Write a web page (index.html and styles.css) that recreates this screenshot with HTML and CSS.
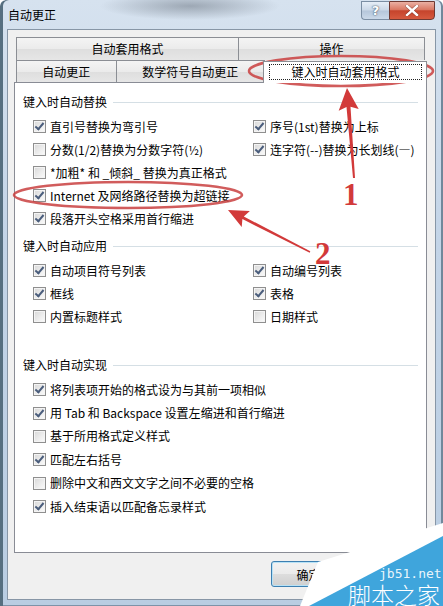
FILE: index.html
```html
<!DOCTYPE html>
<html lang="zh-CN">
<head>
    <meta charset="UTF-8">
    <meta name="viewport" content="width=device-width, initial-scale=1.0">
    <link rel="stylesheet" href="styles.css">
</head>
<body>
    <div class="window">
        <div class="titlebar">
            <span class="title">自动更正</span>
            <div class="caption">
                <span class="cap-help">?</span>
                <span class="cap-close">
                    <svg width="14" height="11" viewBox="0 0 14 11">
                        <path d="M2 1 L12 10 M12 1 L2 10" stroke="#5a2019" stroke-width="3.6" stroke-linecap="square" opacity="0.5"/>
                        <path d="M2 1 L12 10 M12 1 L2 10" stroke="#fff" stroke-width="2.4" stroke-linecap="square"/>
                    </svg>
                </span>
            </div>
        </div>

        <div class="client">
            <div class="tabstrip">
                <div class="tab-row">
                    <div class="tab tab-format">自动套用格式</div>
                    <div class="tab tab-actions">操作</div>
                </div>
                <div class="tab-row">
                    <div class="tab tab-auto">自动更正</div>
                    <div class="tab tab-math">数学符号自动更正</div>
                    <div class="tab active"><span class="focus">键入时自动套用格式</span></div>
                </div>
            </div>

            <div class="panel">
                <section class="group">
                    <div class="group-title"><span>键入时自动替换</span></div>
                    <div class="options">
                        <label class="opt"><span class="cb on"></span>直引号替换为弯引号</label>
                        <label class="opt"><span class="cb on"></span>序号(1st)替换为上标</label>
                        <label class="opt"><span class="cb"></span>分数(1/2)替换为分数字符(½)</label>
                        <label class="opt"><span class="cb on"></span>连字符(--)替换为长划线(—)</label>
                        <label class="opt wide"><span class="cb"></span>*加粗* 和 _倾斜_ 替换为真正格式</label>
                        <label class="opt wide"><span class="cb on"></span>Internet 及网络路径替换为超链接</label>
                        <label class="opt wide"><span class="cb on"></span>段落开头空格采用首行缩进</label>
                    </div>
                </section>

                <section class="group group-apply">
                    <div class="group-title"><span>键入时自动应用</span></div>
                    <div class="options">
                        <label class="opt"><span class="cb on"></span>自动项目符号列表</label>
                        <label class="opt"><span class="cb on"></span>自动编号列表</label>
                        <label class="opt"><span class="cb on"></span>框线</label>
                        <label class="opt"><span class="cb on"></span>表格</label>
                        <label class="opt"><span class="cb"></span>内置标题样式</label>
                        <label class="opt"><span class="cb"></span>日期样式</label>
                    </div>
                </section>

                <section class="group group-do">
                    <div class="group-title"><span>键入时自动实现</span></div>
                    <div class="options single">
                        <label class="opt"><span class="cb on"></span>将列表项开始的格式设为与其前一项相似</label>
                        <label class="opt"><span class="cb on"></span>用 Tab 和 Backspace 设置左缩进和首行缩进</label>
                        <label class="opt"><span class="cb"></span>基于所用格式定义样式</label>
                        <label class="opt"><span class="cb on"></span>匹配左右括号</label>
                        <label class="opt"><span class="cb"></span>删除中文和西文文字之间不必要的空格</label>
                        <label class="opt"><span class="cb on"></span>插入结束语以匹配备忘录样式</label>
                    </div>
                </section>
            </div>

            <div class="footer">
                <button class="btn default">确定</button>
            </div>
        </div>

        <!-- red marks drawn on the screenshot + site watermark -->
        <svg class="overlay" width="443" height="606" viewBox="0 0 443 606">
            <g class="marks">
                <ellipse cx="341" cy="71" rx="92" ry="15" fill="none" stroke="#c9403f" stroke-width="2.6" opacity="0.85"/>
                <ellipse cx="128" cy="195" rx="114" ry="13" fill="none" stroke="#c9403f" stroke-width="2.6" opacity="0.85"/>
                <polygon points="347,88 358.7,109.1 350.5,106.8 355,178 353,178 346.5,107.1 338.7,110.7" fill="#d23a3a"/>
                <polygon points="228,210 249.9,211 243.8,216.5 310.3,251.3 309.7,252.7 242.4,219.1 241.7,227.1" fill="#d23a3a"/>
                <text x="343" y="205" class="num">1</text>
                <text x="315" y="264" class="num">2</text>
            </g>
            <g class="watermark">
                <polygon points="300,606 318,562 443,523 443,606" fill="#ffffff"/>
                <polygon points="309,606 443,536 443,606" fill="#3fa5dc"/>
                <text x="379" y="578" class="wm-site">jb51.net</text>
                <text x="348" y="604" class="wm-name">脚本之家</text>
            </g>
        </svg>
    </div>
</body>
</html>
```

FILE: styles.css
```css
* {
    box-sizing: border-box;
}
body {
    margin: 0;
    width: 443px;
    height: 606px;
    overflow: hidden;
    font-family: "Noto Sans CJK SC", "Noto Sans", sans-serif;
    font-size: 12px;
    color: #000;
}

/* window frame */
.window {
    position: relative;
    width: 443px;
    height: 606px;
    padding: 0 7px 6px 7px;
    display: flex;
    flex-direction: column;
    background:
        radial-gradient(ellipse 90px 14px at 190px 6px, rgba(110,120,132,0.55), rgba(110,120,132,0)),
        linear-gradient(180deg, #d6e2ef 0%, #c3d4e7 40%, #b9cde2 100%);
    box-shadow: inset 3px 0 0 #566f80, inset -2px 0 0 #71889b, inset 0 -1px 0 #7d93a8;
    border-radius: 6px 6px 0 0;
}
.titlebar {
    height: 29px;
    display: flex;
    justify-content: space-between;
    align-items: flex-start;
}
.title {
    margin: 7px 0 0 1px;
    line-height: 16px;
}
.caption {
    display: flex;
    margin: 1px 1px 0 0;
}
.cap-help {
    width: 28px;
    height: 19px;
    display: flex;
    align-items: center;
    justify-content: center;
    border: 1px solid #7b8ea3;
    border-right: none;
    border-radius: 0 0 0 4px;
    background: linear-gradient(180deg, #e6eef7 0%, #cbd8e7 48%, #b5c6da 52%, #cbd9e9 100%);
    color: #fff;
    font-family: "DejaVu Sans", sans-serif;
    font-weight: bold;
    font-size: 13px;
    text-shadow: 0 0 2px #44566b, 0 0 1px #44566b;
}
.cap-close {
    width: 46px;
    height: 19px;
    display: flex;
    align-items: center;
    justify-content: center;
    border: 1px solid #6f3a33;
    border-radius: 0 0 4px 0;
    background: linear-gradient(180deg, #eab0a3 0%, #da7863 45%, #c6442c 52%, #d65a3f 100%);
}

/* client area */
.client {
    flex: 1;
    display: flex;
    flex-direction: column;
    background: #f0f0f0;
    border: 1px solid #8796a6;
    padding: 7px 8px 0 6px;
}

/* tabs */
.tabstrip {
    padding-left: 2px;
}
.tab-row {
    display: flex;
    align-items: flex-end;
}
.tab {
    height: 23px;
    display: flex;
    align-items: center;
    justify-content: center;
    border: 1px solid #8b8e94;
    border-bottom: none;
    background: linear-gradient(180deg, #f4f4f4 0%, #ebebeb 50%, #dedede 51%, #e6e6e6 100%);
    line-height: 16px;
}
.tab-row + .tab-row .tab {
    height: 22px;
}
.tab-format { width: 223px; }
.tab-actions { width: 187px; margin-left: -1px; }
.tab-auto { width: 101px; }
.tab-math { width: 150px; margin-left: -1px; }
.tab.active {
    position: relative;
    z-index: 1;
    width: 165px;
    height: 26px;
    margin: 0 0 -1px -2px;
    padding: 2px 4px 3px 5px;
    background: #fff;
    align-items: stretch;
}
.focus {
    flex: 1;
    display: flex;
    align-items: center;
    justify-content: center;
    border: 1px dotted #222;
}

/* tab page */
.panel {
    height: 471px;
    background: #fff;
    border: 1px solid #898c95;
    padding: 11px 8px 0 8px;
}
.group-title {
    display: flex;
    align-items: center;
    height: 16px;
    line-height: 16px;
    margin-bottom: 5px;
}
.group-title::after {
    content: "";
    flex: 1;
    height: 1px;
    margin-left: 6px;
    background: #d5dfe5;
}
.group-apply {
    margin-top: 8px;
}
.group-do {
    margin-top: 29px;
}
.options {
    display: grid;
    grid-template-columns: 220px 1fr;
    padding-left: 10px;
}
.options.single {
    grid-template-columns: 1fr;
}
.group-do .opt {
    height: 23.4px;
}
.opt {
    height: 23px;
    display: flex;
    align-items: center;
    gap: 4px;
    line-height: 16px;
    white-space: nowrap;
}
.opt.wide {
    grid-column: 1 / -1;
}
.cb {
    position: relative;
    flex: none;
    width: 13px;
    height: 13px;
    border: 1px solid #8f8f8f;
    background: linear-gradient(135deg, #d8d8d8 0%, #eeeeee 60%, #fbfbfb 100%);
    box-shadow: inset 0 0 0 1px #f4f4f4;
}
.cb.on::after {
    content: "";
    position: absolute;
    left: 3px;
    top: 0px;
    width: 3px;
    height: 7px;
    border-right: 2px solid #4a5d7c;
    border-bottom: 2px solid #4a5d7c;
    transform: rotate(40deg);
}

/* buttons */
.footer {
    flex: 1;
    display: flex;
    justify-content: flex-end;
    align-items: flex-start;
    padding: 8px 81px 0 0;
}
.btn {
    width: 75px;
    height: 26px;
    font-family: inherit;
    font-size: 12px;
    color: #000;
    border: 1px solid #707070;
    border-radius: 3px;
    background: linear-gradient(180deg, #f2f2f2 0%, #ebebeb 49%, #dddddd 51%, #cfcfcf 100%);
}
.btn.default {
    border-color: #3c7fb1;
    box-shadow: inset 0 0 0 1px #b8e2f6;
}

/* overlay */
.overlay {
    position: absolute;
    top: 0;
    left: 0;
    pointer-events: none;
}
.num {
    font-family: "Liberation Serif", serif;
    font-weight: bold;
    font-size: 31px;
    fill: #d23a3a;
}
.wm-site {
    font-family: "DejaVu Sans Mono", monospace;
    font-size: 13px;
    fill: #ffffff;
    fill-opacity: 0.9;
}
.wm-name {
    font-family: "Noto Sans CJK SC", sans-serif;
    font-weight: 300;
    font-size: 23px;
    fill: #ffffff;
}
```
